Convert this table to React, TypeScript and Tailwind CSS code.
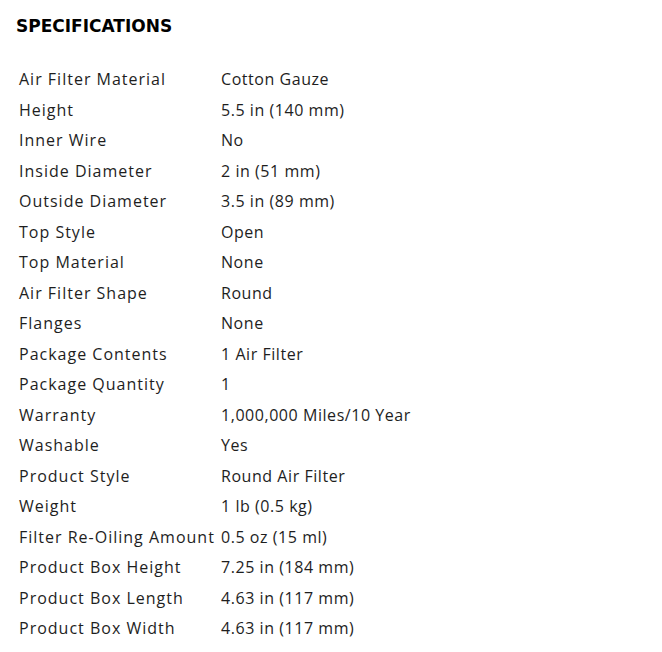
const rows: [string, string][] = [
  ["Air Filter Material", "Cotton Gauze"],
  ["Height", "5.5 in (140 mm)"],
  ["Inner Wire", "No"],
  ["Inside Diameter", "2 in (51 mm)"],
  ["Outside Diameter", "3.5 in (89 mm)"],
  ["Top Style", "Open"],
  ["Top Material", "None"],
  ["Air Filter Shape", "Round"],
  ["Flanges", "None"],
  ["Package Contents", "1 Air Filter"],
  ["Package Quantity", "1"],
  ["Warranty", "1,000,000 Miles/10 Year"],
  ["Washable", "Yes"],
  ["Product Style", "Round Air Filter"],
  ["Weight", "1 lb (0.5 kg)"],
  ["Filter Re-Oiling Amount", "0.5 oz (15 ml)"],
  ["Product Box Height", "7.25 in (184 mm)"],
  ["Product Box Length", "4.63 in (117 mm)"],
  ["Product Box Width", "4.63 in (117 mm)"],
];

export default function App() {
  return (
    <div className="bg-white w-[662px] h-[652px] text-[#1e1e1e]" style={{ fontFamily: '"Open Sans", "DejaVu Sans", sans-serif' }}>
      <h2 className="pl-[16px] pt-[15px] text-[17px] font-extrabold tracking-[0px] text-black leading-[22px]" style={{ fontFamily: '"DejaVu Sans", sans-serif' }}>
        SPECIFICATIONS
      </h2>
      <div className="pl-[19px] pt-[27px] flex flex-col">
        {rows.map(([k, v]) => (
          <div key={k} className="flex h-[30.5px] items-center text-[16px] leading-[20px]">
            <div className="w-[202px] shrink-0 whitespace-nowrap tracking-[1px]">{k}</div>
            <div className="whitespace-nowrap tracking-[0.55px]">{v}</div>
          </div>
        ))}
      </div>
    </div>
  );
}
